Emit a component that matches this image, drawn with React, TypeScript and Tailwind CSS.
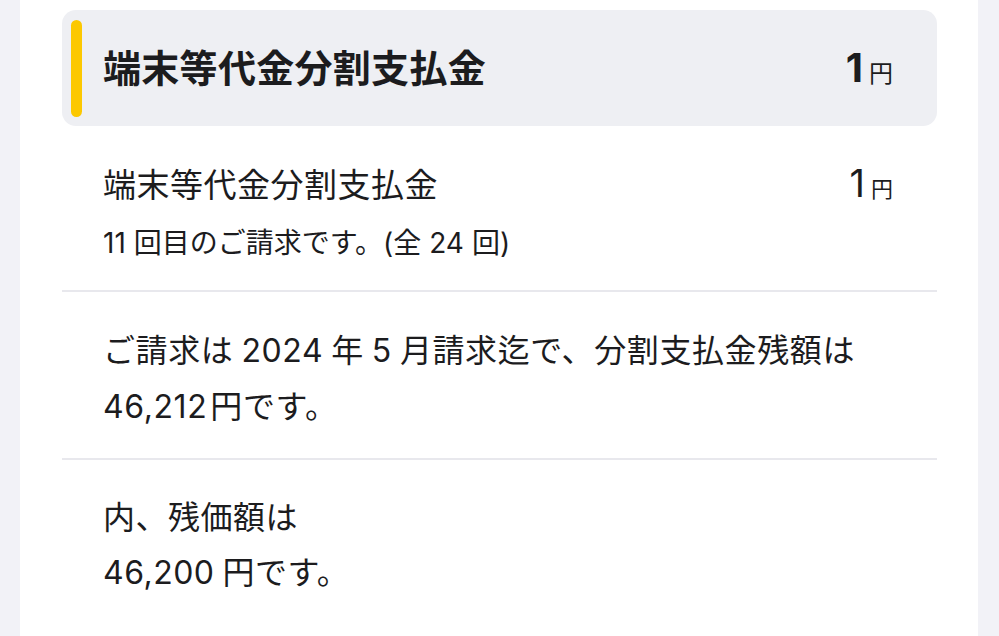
import React from 'react'

const font = { fontFamily: 'Inter, "Noto Sans CJK JP", "Noto Sans", sans-serif' }

const Gap: React.FC = () => <span className="inline-block w-[8px]" />
const SmallGap: React.FC = () => <span className="inline-block w-[3px]" />

const App: React.FC = () => {
    return (
        <div className="w-[999px] h-[636px] overflow-hidden bg-[#f2f2f7] pl-[20px] pr-[21px]" style={font}>
            <div className="h-full bg-white px-[42px] pt-[10px] pr-[41px] text-[#1c1c1e]">
                {/* header */}
                <div className="flex items-center h-[116px] rounded-[14px] bg-[#eeeff3] pl-[9px] pr-[44px]">
                    <div className="w-[11px] h-[97px] rounded-full bg-[#fcc800]" />
                    <h1 className="ml-[21px] flex-1 text-[38px] font-bold leading-none tracking-[0.3px]">端末等代金分割支払金</h1>
                    <div className="flex items-baseline">
                        <span className="text-[40px] font-bold leading-none">1</span>
                        <span className="ml-[6px] text-[24px] leading-none">円</span>
                    </div>
                </div>

                {/* item row */}
                <section className="pl-[41px] pr-[44px] pt-[35px] pb-[27px] border-b-2 border-[#e8e8ed]">
                    <div className="flex items-baseline justify-between">
                        <span className="text-[33px] leading-[44px] tracking-[0.5px]">端末等代金分割支払金</span>
                        <div className="flex items-baseline">
                            <span className="text-[38px] leading-[44px]">1</span>
                            <span className="ml-[6px] text-[22px]">円</span>
                        </div>
                    </div>
                    <p className="mt-[16px] text-[28px] leading-[40px]">
                        11<Gap />回目のご請求です。(全<Gap />24<Gap />回)
                    </p>
                </section>

                <section className="pl-[41px] pt-[31px] pb-[23px] border-b-2 border-[#e8e8ed]">
                    <p className="text-[32px] leading-[56px] tracking-[0.6px]">
                        ご請求は<Gap />2024<Gap />年<Gap />5<Gap />月請求迄で、分割支払金残額は
                        <br />
                        46,212<SmallGap />円です。
                    </p>
                </section>

                <section className="pl-[41px] pt-[30px]">
                    <p className="text-[32px] leading-[55px] tracking-[0.5px]">
                        内、残価額は
                        <br />
                        46,200<Gap />円です。
                    </p>
                </section>
            </div>
        </div>
    )
}

export default App
